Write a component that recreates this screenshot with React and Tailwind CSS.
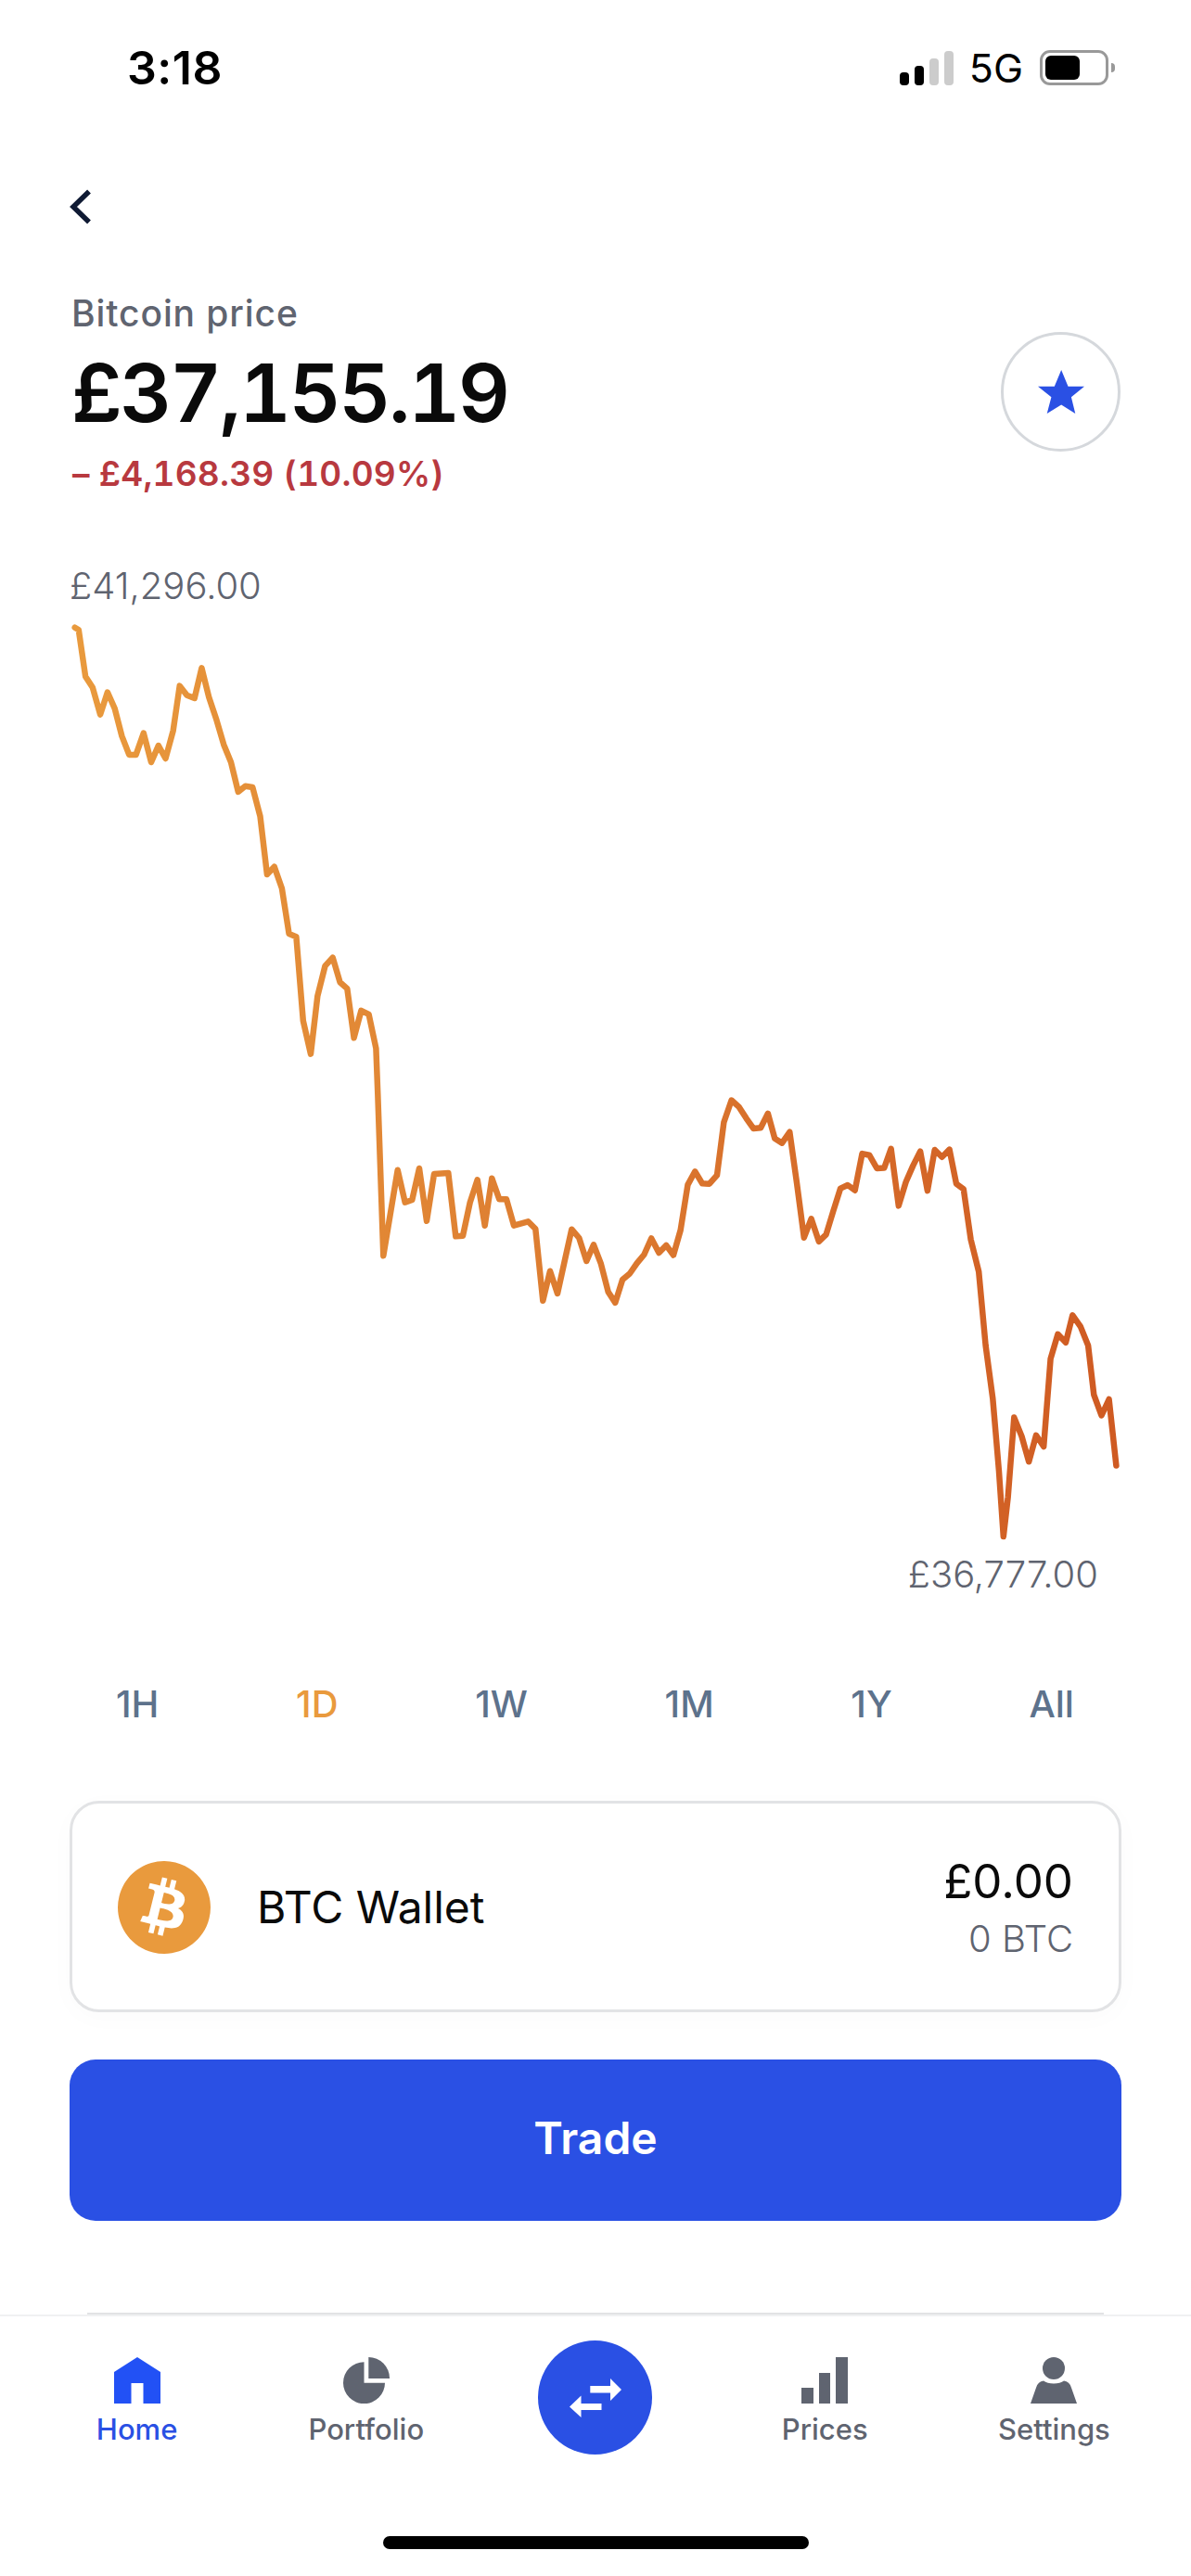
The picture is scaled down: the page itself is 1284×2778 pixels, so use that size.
import { SiBitcoin } from 'react-icons/si'

const chartPoints = `80.7,676.7 84.8,679.2 92.1,729.4 99.9,741.6 108.1,770.6 115.9,746.5 123.7,764.1 131.4,793.9 139.2,813.9 146.6,813.9 154.8,790.6 163,822 170.8,804.1 178.5,818 186.7,787.8 193.7,739.6 201.5,749.8 209.7,753 217.4,720.4 225.2,751.8 233.4,776.3 241.2,802.9 249,822 256.8,853.9 264.5,847.8 272.3,849 280.5,880.4 287.9,942.9 295.7,934.7 303.9,958 311.6,1007 319.4,1010.2 326.8,1100.8 335,1136.7 342.3,1074.3 350.5,1041.6 358.7,1032.7 366.5,1059.2 374.3,1066.1 381.6,1119.2 389.4,1089.8 397.6,1093.9 405.4,1130.6 407.3,1180 413.3,1354.3 428.7,1261.7 436.7,1296.7 444.3,1294 452,1260 460,1316.7 468,1266 483.3,1265 491.3,1333.3 499,1332.7 506.7,1296.7 514.7,1272.3 522.7,1321.7 530.3,1270.7 538.3,1293.3 546,1293.3 554,1321.7 569.3,1317.3 577.3,1325.3 585.3,1402.7 593,1370.7 601,1395 608.7,1360 616.3,1325.7 624.3,1335 632.3,1360 640,1342.3 647.7,1362.3 655.7,1393.3 663.3,1404.9 671.1,1380 678.9,1373.5 686.6,1362.4 694.4,1353 702.2,1335.5 710.4,1351 718.2,1342.9 726,1353.5 733.7,1326.5 741.5,1277.6 749.3,1263.3 757.1,1276.3 764.8,1276.7 773,1267.3 780.4,1210.2 788.6,1186.5 796.8,1193.9 804.6,1206.1 812.4,1217.1 820.1,1216.3 827.9,1200.8 835.3,1227.8 843.1,1232.7 851.3,1220.8 859,1275.5 866.8,1334.7 874.6,1314.3 882.8,1338.8 890.6,1331.4 898.3,1306.1 906.1,1281.6 913.9,1278 921.7,1283.7 929.5,1244.1 937.2,1245.7 945.4,1260 953.2,1259.6 960.6,1238.8 968.8,1300.4 976.6,1274.7 984.3,1257.1 992.1,1241.6 999.9,1284.1 1007.7,1240 1015.5,1247.8 1023.6,1239.6 1031,1276.7 1038.8,1282.4 1046.6,1336.7 1055.2,1371.4 1062.6,1451 1070.3,1508.2 1076.9,1585.7 1081.8,1657.1 1086.7,1614.3 1093.3,1528.6 1101.5,1549 1109.2,1576.3 1117,1547.8 1125.2,1560 1132.6,1465.3 1140.4,1438.8 1149,1447.8 1156.3,1418.4 1164.9,1430.6 1173.1,1451 1179.3,1504.1 1187.5,1526.5 1195.6,1509 1203.4,1580.4`

const ranges = ['1H', '1D', '1W', '1M', '1Y', 'All']

const StatusBar = () => (
  <div className="flex h-[146px] items-center justify-between pl-[137px] pr-[82px]">
    <span className="text-[50px] font-semibold leading-none tracking-[0.5px] text-black">3:18</span>
    <div className="flex items-center">
      <div className="flex items-end gap-[6px] h-[37px] mt-[1px]">
        <span className="w-[10px] h-[14px] rounded-[4px] bg-black" />
        <span className="w-[10px] h-[21px] rounded-[4px] bg-black" />
        <span className="w-[10px] h-[29px] rounded-[4px] bg-[#cccccc]" />
        <span className="w-[10px] h-[37px] rounded-[4px] bg-[#cccccc]" />
      </div>
      <span className="ml-[17px] text-[43px] font-normal leading-none text-black">5G</span>
      <div className="ml-[18px] flex h-[38px] w-[74px] items-center rounded-[11px] border-[3px] border-[#999999] p-[3px]">
        <span className="h-full w-[37px] rounded-[6px] bg-black" />
      </div>
      <span className="ml-[3px] h-[10px] w-[4px] rounded-r-full bg-[#999999]" />
    </div>
  </div>
)

const PriceChart = () => (
  <svg viewBox="0 660 1284 1010" className="block w-[1284px] h-[1010px]" fill="none">
    <defs>
      <linearGradient id="chartLine" gradientUnits="userSpaceOnUse" x1="80" y1="0" x2="1204" y2="0">
        <stop offset="0" stopColor="#e99a3d" />
        <stop offset="1" stopColor="#cf5a22" />
      </linearGradient>
    </defs>
    <polyline points={chartPoints} stroke="url(#chartLine)" strokeWidth="6.5" strokeLinejoin="round" strokeLinecap="round" />
  </svg>
)

const NavItem = ({ label, active, children }) => (
  <div className="flex flex-col items-center pt-[18px]">
    <svg viewBox="0 0 50 50" className={`w-[50px] h-[50px] ${active ? 'text-[#2251f5]' : 'text-[#5f6470]'}`} fill="currentColor">
      {children}
    </svg>
    <span className={`mt-[8px] text-[31px] font-medium leading-[40px] ${active ? 'text-[#2a50e4]' : 'text-[#5f6470]'}`}>{label}</span>
  </div>
)

export default function App() {
  return (
    <div className="flex h-[2778px] w-[1284px] flex-col overflow-hidden bg-white font-['Inter',sans-serif]">
      <StatusBar />

      <svg viewBox="0 0 24 38" className="ml-[75px] mt-[58px] w-[24px] h-[38px]" fill="none">
        <path d="M21 2.5 L4 19 L21 35.5" stroke="#0f1a33" strokeWidth="5.5" />
      </svg>

      {/* Price header */}
      <div className="mt-[73px] flex justify-between pl-[77px] pr-[76px]">
        <div>
          <p className="text-[39px] font-medium leading-[46px] tracking-[0.9px] text-[#5f6470]">Bitcoin price</p>
          <p className="mt-[16px] text-[87px] font-semibold leading-[94px] tracking-[-2.5px] tabular-nums text-[#0a0a0a]">£37,155.19</p>
          <p className="mt-[17px] pl-[1px] text-[37px] font-semibold leading-[46px] tracking-[0.2px] tabular-nums text-[#b8393f]">– £4,168.39 (10.09%)</p>
        </div>
        <button className="mt-[43px] flex h-[129px] w-[129px] items-center justify-center rounded-full border-[3px] border-[#d5d8dc]">
          <svg viewBox="178 178 149 140" className="w-[50px] h-[47px]" fill="#2a50e4">
            <polygon points="253,178 275,231 327,231 285,265 298,318 253,290 207,318 221,265 178,231 231,231" />
          </svg>
        </button>
      </div>

      {/* Chart */}
      <p className="mt-[75px] pl-[75px] text-[40px] font-light leading-[46px] text-[#5f6470]">£41,296.00</p>
      <div className="mt-[5px]">
        <PriceChart />
      </div>
      <p className="mt-[5px] pr-[100px] text-right text-[40px] font-light leading-[46px] text-[#5f6470]">£36,777.00</p>

      {/* Range tabs */}
      <div className="mt-[94px] flex justify-between pl-[125px] pr-[126px]">
        {ranges.map((r) => (
          <span key={r} className={`text-[40px] font-medium leading-[46px] ${r === '1D' ? 'text-[#e99a3d]' : 'text-[#5d728c]'}`}>
            {r}
          </span>
        ))}
      </div>

      {/* Wallet card */}
      <div className="mx-[75px] mt-[81px] flex h-[228px] items-center rounded-[32px] border-[3px] border-[#e2e3e5] pl-[49px] pr-[49px] pt-[2px] shadow-[0_6px_30px_rgba(0,0,0,0.02)]">
        <SiBitcoin className="text-[#e99a3d]" size={100} />
        <span className="ml-[50px] text-[48px] leading-[56px] text-[#0a0a0a]">BTC Wallet</span>
        <div className="ml-auto mt-[3px] text-right">
          <p className="text-[51px] leading-[52px] text-[#0a0a0a]">£0.00</p>
          <p className="mt-[13px] text-[40px] font-light leading-[46px] text-[#5f6470]">0 BTC</p>
        </div>
      </div>

      <button className="mx-[75px] mt-[51px] h-[174px] rounded-[28px] bg-[#2a50e4] pb-[4px] text-[48px] font-semibold text-white">
        Trade
      </button>

      {/* Next card peeking out under the nav */}
      <div className="mx-[94px] mt-[99px] h-[2px] bg-[#e2e3e5]" />

      {/* Bottom nav */}
      <nav className="flex flex-1 flex-col border-t-2 border-[#f0f1f2] pt-[26px]">
        <div className="grid grid-cols-5 px-[24px]">
          <NavItem label="Home" active>
            <path d="M25 0 L50 16 V50 H31.5 V28 H18.5 V50 H0 V16 Z" />
          </NavItem>
          <NavItem label="Portfolio">
            <path d="M22.5 5.2 A22.5 22.5 0 1 0 45 27.7 H22.5 Z" />
            <path d="M27.3 0 A22.7 22.7 0 0 1 50 23 H27.3 Z" />
          </NavItem>
          <div className="flex justify-center">
            <button className="flex h-[123px] w-[123px] items-center justify-center rounded-full bg-[#2a50e4]">
              <svg viewBox="-30 -24 60 48" className="w-[60px] h-[48px]" fill="white">
                <path d="M-5.7 -13 H16 V-21 L28 -9 L16 3 V-5.5 H-5.7 Z" />
                <path d="M6.5 6 H-15.5 V-2.5 L-28 9.5 L-15.5 21 V13 H6.5 Z" />
              </svg>
            </button>
          </div>
          <NavItem label="Prices">
            <rect x="0" y="33" width="13" height="17" />
            <rect x="19" y="17" width="12" height="33" />
            <rect x="37" y="0" width="13" height="50" />
          </NavItem>
          <NavItem label="Settings">
            <circle cx="25" cy="12" r="12" />
            <path d="M0 50 L6 33 Q8 26 14 25.5 Q18 28.5 25 28.5 Q32 28.5 36 25.5 Q42 26 44 33 L50 50 Z" />
          </NavItem>
        </div>
        <div className="mx-auto mt-[88px] h-[14px] w-[459px] rounded-full bg-black" />
      </nav>
    </div>
  )
}
